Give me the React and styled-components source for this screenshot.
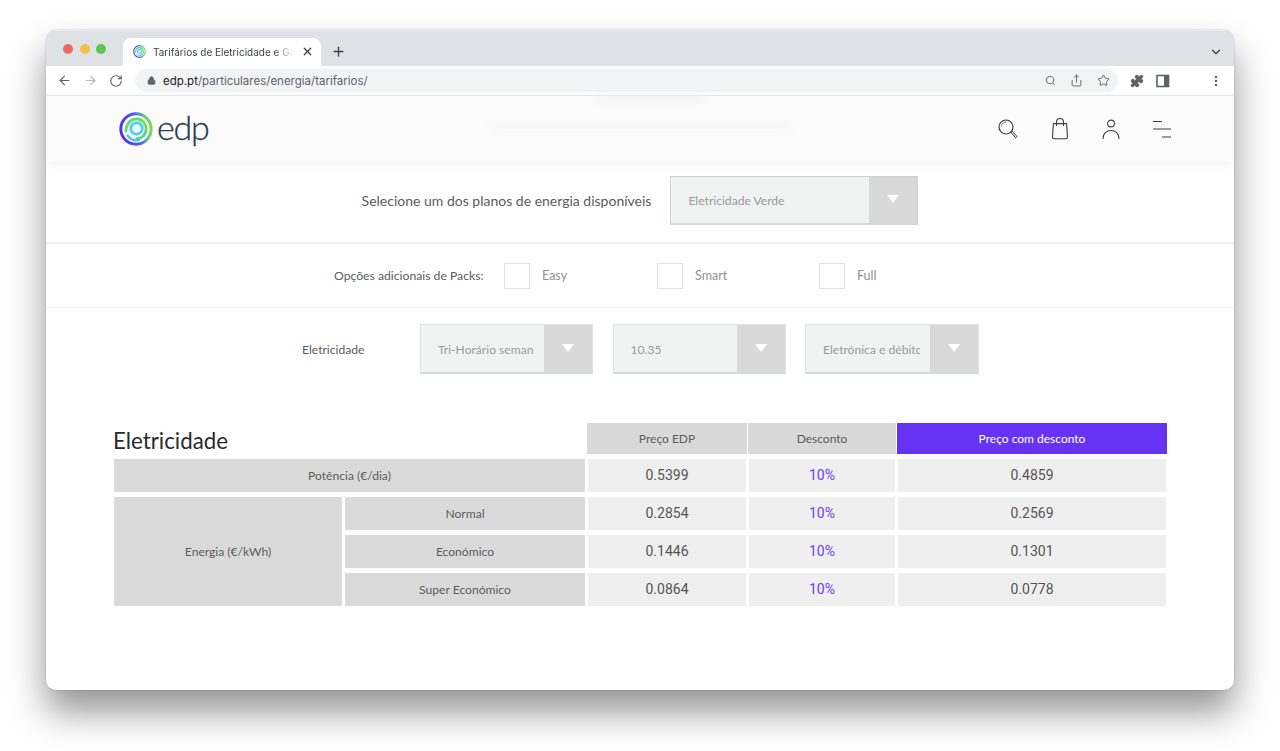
import React from "react";
import styled, { createGlobalStyle } from "styled-components";
import {
  ArrowLeft,
  ArrowRight,
  RotateCw,
  Lock,
  Search,
  Share,
  Star,
  MoreVertical,
  Plus,
  X,
  ChevronDown,
  Puzzle,
} from "lucide-react";

const PAGE_FONT = `"Lato", "Liberation Sans", sans-serif`;

const GlobalStyle = createGlobalStyle`
  html, body {
    margin: 0;
    padding: 0;
    background: #fff;
  }
  body {
    font-family: ${PAGE_FONT};
    overflow: hidden;
  }
`;

const rows = [
  { edp: "0.5399", off: "10%", final: "0.4859" },
  { edp: "0.2854", off: "10%", final: "0.2569" },
  { edp: "0.1446", off: "10%", final: "0.1301" },
  { edp: "0.0864", off: "10%", final: "0.0778" },
];

const Favicon = ({ size }) => (
  <svg width={size} height={size} viewBox="0 0 32 32" fill="none">
    <defs>
      <linearGradient id={`ring${size}`} x1="0" y1="0.3" x2="1" y2="0.1">
        <stop offset="0" stopColor="#5a2ff2" />
        <stop offset="0.5" stopColor="#4b63f0" />
        <stop offset="0.8" stopColor="#5fd07a" />
        <stop offset="1" stopColor="#86e03e" />
      </linearGradient>
      <linearGradient id={`mid${size}`} x1="0" y1="0" x2="1" y2="1">
        <stop offset="0" stopColor="#55d88a" />
        <stop offset="0.6" stopColor="#74e045" />
        <stop offset="1" stopColor="#4fcfa0" />
      </linearGradient>
    </defs>
    <circle cx="16" cy="16" r="14.3" stroke={`url(#ring${size})`} strokeWidth="2.8" />
    <path d="M6.5 18c0-7 4.6-11.5 10-11.5 5.4 0 9 4.4 9 9.5 0 5.4-4 9-8.6 9" stroke={`url(#mid${size})`} strokeWidth="2.6" strokeLinecap="round" />
    <circle cx="16.5" cy="15.5" r="5.4" stroke="#4fd4ee" strokeWidth="2.8" />
    <path d="M8 22c2.4 3.6 6.4 5.4 11 4.4" stroke="#35c5f0" strokeWidth="2" strokeLinecap="round" />
  </svg>
);

const SidePanelIcon = () => (
  <svg width="14" height="14" viewBox="0 0 14 14">
    <rect x="1" y="1.5" width="11.5" height="11" fill="none" stroke="#5f6368" strokeWidth="1.6" />
    <rect x="8" y="1.5" width="4.5" height="11" fill="#5f6368" />
  </svg>
);

const SearchGlyph = () => (
  <svg width="22" height="22" viewBox="0 0 22 22" fill="none" stroke="#3c3c3c">
    <circle cx="9" cy="9" r="7" strokeWidth="1.2" />
    <path d="M4.5 8.5a4.5 4.5 0 0 1 4.5-4.5" strokeWidth="0.7" />
    <path d="M13.6 14l1.2-1.1 5.2 5.6-1.3 1.3z" strokeWidth="1" />
  </svg>
);

const BagGlyph = () => (
  <svg width="20" height="22" viewBox="0 0 20 22" fill="none" stroke="#3c3c3c" strokeWidth="1.1">
    <path d="M3.4 5.6h13.2l.9 13.4a1.8 1.8 0 0 1-1.8 1.8H4.3A1.8 1.8 0 0 1 2.5 19z" strokeLinejoin="round" />
    <path d="M6.5 8V4a3.5 3.5 0 0 1 7 0v4" />
  </svg>
);

const PersonGlyph = () => (
  <svg width="20" height="22" viewBox="0 0 20 22" fill="none" stroke="#3c3c3c" strokeWidth="1.1">
    <circle cx="10" cy="5.5" r="3.4" />
    <path d="M2 20.5c0-5 3.5-8 8-8s8 3 8 8" strokeLinecap="round" />
  </svg>
);

const MenuGlyph = () => (
  <svg width="20" height="20" viewBox="0 0 20 20" fill="none" stroke="#3c3c3c" strokeWidth="1.1">
    <path d="M1 2.5h9M1 10h18M10 18h9" />
  </svg>
);

const Dropdown = ({ value, $big, width }) => (
  <SelectBox $width={width} $big={$big}>
    <SelectValue $big={$big}>{value}</SelectValue>
    <SelectArrow>
      <Triangle />
    </SelectArrow>
  </SelectBox>
);

const App = () => (
  <>
    <GlobalStyle />
    <Stage>
      <Window>
        <TabStrip>
          <TrafficLights>
            <Light $color="#ec6a5e" />
            <Light $color="#f4bf4f" />
            <Light $color="#61c554" />
          </TrafficLights>
          <Tab>
            <Favicon size={13} />
            <TabTitle>Tarifários de Eletricidade e Gás</TabTitle>
            <X size={13} color="#3c4043" strokeWidth={2.2} />
          </Tab>
          <NewTab>
            <Plus size={15} color="#3c4043" strokeWidth={2.2} />
          </NewTab>
          <StripEnd>
            <ChevronDown size={14} color="#3c4043" strokeWidth={2.2} />
          </StripEnd>
        </TabStrip>
        <Toolbar>
          <NavButtons>
            <ArrowLeft size={15} color="#5f6368" strokeWidth={1.8} />
            <ArrowRight size={15} color="#b4b7bb" strokeWidth={1.8} />
            <RotateCw size={14} color="#5f6368" strokeWidth={2} />
          </NavButtons>
          <Omnibox>
            <Lock size={9} color="#5f6368" fill="#5f6368" strokeWidth={2} />
            <Url>
              <strong>edp.pt</strong>/particulares/energia/tarifarios/
            </Url>
            <OmniIcons>
              <Search size={11} color="#5f6368" strokeWidth={2} />
              <Share size={13} color="#5f6368" strokeWidth={1.7} />
              <Star size={13} color="#5f6368" strokeWidth={1.8} />
            </OmniIcons>
          </Omnibox>
          <ExtIcons>
            <Puzzle size={14} color="#5f6368" fill="#5f6368" strokeWidth={1.6} />
            <SidePanelIcon />
          </ExtIcons>
          <MoreSlot>
            <MoreVertical size={14} color="#5f6368" strokeWidth={2.4} />
          </MoreSlot>
        </Toolbar>
        <SiteHeader>
          <GhostLine />
          <Logo>
            <Favicon size={34} />
            <LogoText>edp</LogoText>
          </Logo>
          <HeaderIcons>
            <SearchGlyph />
            <BagGlyph />
            <PersonGlyph />
            <MenuGlyph />
          </HeaderIcons>
        </SiteHeader>
        <PlanRow>
          <PlanLabel>Selecione um dos planos de energia disponíveis</PlanLabel>
          <Dropdown value="Eletricidade Verde" width={248} $big />
        </PlanRow>
        <PackRow>
          <PackLabel>Opções adicionais de Packs:</PackLabel>
          <PackOption $width={153}>
            <CheckBox />
            <PackName>Easy</PackName>
          </PackOption>
          <PackOption $width={162}>
            <CheckBox />
            <PackName>Smart</PackName>
          </PackOption>
          <PackOption $width={100}>
            <CheckBox />
            <PackName>Full</PackName>
          </PackOption>
        </PackRow>
        <OptionsRow>
          <OptionsLabel>Eletricidade</OptionsLabel>
          <Dropdown value="Tri-Horário semanal" width={173} />
          <Dropdown value="10.35" width={173} />
          <Dropdown value="Eletrónica e débito direto" width={174} />
        </OptionsRow>
        <TableWrap>
          <PriceGrid>
            <Title>Eletricidade</Title>
            <HeadCell>Preço EDP</HeadCell>
            <HeadCell>Desconto</HeadCell>
            <HeadCell $accent>Preço com desconto</HeadCell>

            <LabelCell $span={2}>Potência (€/dia)</LabelCell>
            <ValueCell>{rows[0].edp}</ValueCell>
            <ValueCell $accent>{rows[0].off}</ValueCell>
            <ValueCell>{rows[0].final}</ValueCell>

            <EnergyCell>Energia (€/kWh)</EnergyCell>
            <LabelCell>Normal</LabelCell>
            <ValueCell>{rows[1].edp}</ValueCell>
            <ValueCell $accent>{rows[1].off}</ValueCell>
            <ValueCell>{rows[1].final}</ValueCell>

            <LabelCell>Económico</LabelCell>
            <ValueCell>{rows[2].edp}</ValueCell>
            <ValueCell $accent>{rows[2].off}</ValueCell>
            <ValueCell>{rows[2].final}</ValueCell>

            <LabelCell>Super Económico</LabelCell>
            <ValueCell>{rows[3].edp}</ValueCell>
            <ValueCell $accent>{rows[3].off}</ValueCell>
            <ValueCell>{rows[3].final}</ValueCell>
          </PriceGrid>
        </TableWrap>
      </Window>
    </Stage>
  </>
);

const Stage = styled.div`
  width: 1280px;
  height: 751px;
  padding: 30px 46px 0;
  box-sizing: border-box;
  overflow: hidden;
`;

const Window = styled.div`
  width: 1188px;
  height: 660px;
  background: #fff;
  border-radius: 10px;
  overflow: hidden;
  box-shadow: 0 22px 36px rgba(0, 0, 0, 0.42), 0 0 2px rgba(0, 0, 0, 0.22);
`;

const TabStrip = styled.div`
  height: 36px;
  background: #dee1e6;
  display: flex;
  align-items: flex-end;
  box-sizing: border-box;
  border-top: 1px solid #e9eaed;
`;

const TrafficLights = styled.div`
  display: flex;
  gap: 6.5px;
  align-self: flex-start;
  margin: 13px 0 0 17px;
  width: 60px;
`;

const Light = styled.span`
  width: 10px;
  height: 10px;
  border-radius: 50%;
  background: ${(p) => p.$color};
`;

const Tab = styled.div`
  width: 198px;
  height: 28px;
  background: #fff;
  border-radius: 8px 8px 0 0;
  display: flex;
  align-items: center;
  padding: 0 7px 1px 10px;
  box-sizing: border-box;
  gap: 7px;
`;

const TabTitle = styled.span`
  flex: 1;
  font: 400 10px "Inter", sans-serif;
  color: #3c4043;
  white-space: nowrap;
  overflow: hidden;
  -webkit-mask-image: linear-gradient(to right, #000 86%, transparent);
`;

const NewTab = styled.div`
  height: 28px;
  margin-left: 10px;
  padding-bottom: 2px;
  box-sizing: border-box;
  display: flex;
  align-items: center;
`;

const StripEnd = styled.div`
  height: 28px;
  margin-left: auto;
  margin-right: 11px;
  display: flex;
  align-items: center;
`;

const Toolbar = styled.div`
  height: 30px;
  background: #fff;
  border-bottom: 1px solid #e8e9eb;
  box-sizing: border-box;
  display: flex;
  align-items: center;
`;

const NavButtons = styled.div`
  width: 89px;
  padding-left: 11px;
  box-sizing: border-box;
  display: flex;
  align-items: center;
  gap: 11px;
`;

const Omnibox = styled.div`
  width: 983px;
  height: 23px;
  background: #f1f3f4;
  border-radius: 12px;
  display: flex;
  align-items: center;
  padding: 0 8px 0 12px;
  box-sizing: border-box;
  gap: 7px;
`;

const Url = styled.div`
  font: 400 11.5px "Inter", sans-serif;
  color: #5f6368;
  strong {
    color: #202124;
    font-weight: 400;
  }
`;

const OmniIcons = styled.div`
  margin-left: auto;
  display: flex;
  align-items: center;
  gap: 14px;
`;

const ExtIcons = styled.div`
  margin-left: 12px;
  display: flex;
  align-items: center;
  gap: 12px;
`;

const MoreSlot = styled.div`
  margin-left: auto;
  margin-right: 11px;
  display: flex;
  align-items: center;
`;

const SiteHeader = styled.header`
  position: relative;
  height: 66px;
  background: #fbfbfb;
  box-shadow: 0 2px 10px rgba(0, 0, 0, 0.06);
  display: flex;
  align-items: center;
  padding: 0 62px 0 73px;
`;

const GhostLine = styled.div`
  position: absolute;
  left: 445px;
  top: 26px;
  width: 300px;
  height: 8px;
  background: #f6f6f6;
  filter: blur(4px);

  &::before {
    content: "";
    position: absolute;
    left: 105px;
    top: -26px;
    width: 110px;
    height: 4px;
    background: #eeeeee;
  }
`;

const Logo = styled.div`
  position: relative;
  display: flex;
  align-items: center;
  gap: 4px;
`;

const LogoText = styled.span`
  font: 300 34px "Lato", sans-serif;
  color: #2c3a49;
  line-height: 1;
  margin-top: -5px;
  letter-spacing: -1.2px;
  -webkit-text-stroke: 0.3px #2c3a49;
`;

const HeaderIcons = styled.div`
  position: relative;
  margin-left: auto;
  display: flex;
  align-items: center;
  gap: 31px;
`;

const PlanRow = styled.div`
  height: 76px;
  display: flex;
  align-items: center;
  justify-content: center;
  gap: 19px;
  border-bottom: 2px solid #f0f0f0;
  padding-bottom: 4px;
`;

const PlanLabel = styled.div`
  font-size: 14px;
  color: #5b5b5b;
`;

const SelectBox = styled.div`
  width: ${(p) => p.$width}px;
  height: ${(p) => (p.$big ? 49 : 50)}px;
  box-sizing: border-box;
  display: flex;
  background: #f1f3f2;
  border: 1px solid ${(p) => (p.$big ? "#ccd3d2" : "#dfe3e2")};
  border-bottom: 2px solid #d3d9d8;
  overflow: hidden;
`;

const SelectValue = styled.div`
  flex: 1;
  min-width: 0;
  margin-right: ${(p) => (p.$big ? 0 : 10)}px;
  padding-left: 17px;
  padding-top: 1px;
  font-size: 12.1px;
  color: #9a9a9a;
  display: flex;
  align-items: center;
  white-space: nowrap;
  overflow: hidden;
`;

const SelectArrow = styled.div`
  width: 48px;
  flex: none;
  background: #d9d9d9;
  display: flex;
  align-items: center;
  justify-content: center;
  padding-bottom: 2px;
  box-sizing: border-box;
`;

const Triangle = styled.span`
  width: 0;
  height: 0;
  border-left: 6px solid transparent;
  border-right: 6px solid transparent;
  border-top: 8px solid #fff;
`;

const PackRow = styled.div`
  height: 63px;
  display: flex;
  align-items: center;
  padding-left: 288px;
  border-bottom: 1px solid #f0f0f0;
`;

const PackLabel = styled.div`
  width: 170px;
  font-size: 12.2px;
  color: #5b5b5b;
  white-space: nowrap;
`;

const PackOption = styled.label`
  width: ${(p) => p.$width}px;
  display: flex;
  align-items: center;
  gap: 12px;
`;

const CheckBox = styled.span`
  width: 26px;
  height: 26px;
  box-sizing: border-box;
  border: 1px solid #e2e2e2;
  background: #fff;
`;

const PackName = styled.span`
  font-size: 12.5px;
  color: #909090;
`;

const OptionsRow = styled.div`
  display: flex;
  align-items: center;
  justify-content: center;
  gap: 19.5px;
  padding: 16px 0 0 1px;
`;

const OptionsLabel = styled.div`
  width: 98.5px;
  font-size: 12.1px;
  color: #5b5b5b;
`;

const TableWrap = styled.div`
  padding: 49px 0 0 68px;
`;

const PriceGrid = styled.div`
  display: grid;
  grid-template-columns: 228px 240px 158px 146px 268px;
  grid-auto-rows: 33px;
  grid-template-rows: 31px;
  column-gap: 3px;
  row-gap: 5px;
`;

const Title = styled.h2`
  grid-column: span 2;
  margin: 0 0 0 -1px;
  font-size: 22.3px;
  font-weight: 400;
  color: #2a2a2a;
  align-self: end;
  line-height: 26px;
`;

const HeadCell = styled.div`
  margin: 0 -1px;
  background: ${(p) => (p.$accent ? "#6633f5" : "#d9d9d9")};
  color: ${(p) => (p.$accent ? "#fff" : "#5c5c5c")};
  font-size: 12px;
  display: flex;
  align-items: center;
  justify-content: center;
`;

const LabelCell = styled.div`
  grid-column: span ${(p) => p.$span || 1};
  background: #dadada;
  color: #5c5c5c;
  font-size: 12.1px;
  display: flex;
  align-items: center;
  justify-content: center;
`;

const EnergyCell = styled(LabelCell)`
  grid-row: span 3;
`;

const ValueCell = styled.div`
  background: #efefef;
  color: ${(p) => (p.$accent ? "#6a3df5" : "#555")};
  font: 400 14px "Roboto", sans-serif;
  padding-bottom: 1px;
  box-sizing: border-box;
  display: flex;
  align-items: center;
  justify-content: center;
`;

export default App;
